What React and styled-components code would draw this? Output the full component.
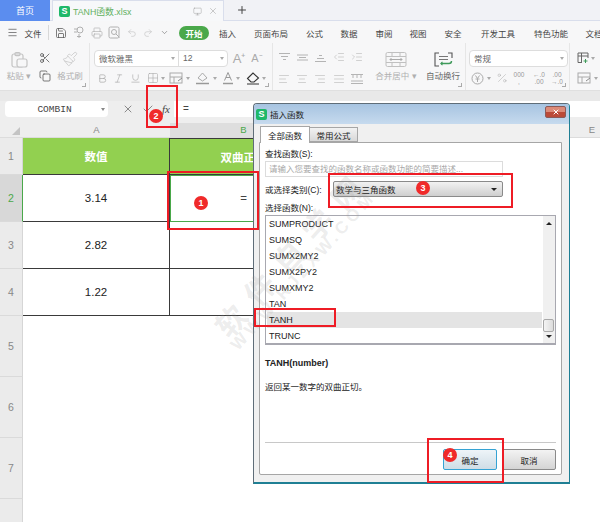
import styled, { createGlobalStyle } from "styled-components";
import {
  AlignCenter, AlignJustify, AlignLeft, AlignRight, Bold, ChevronDown, Copy, Grid2x2, IndentDecrease,
  IndentIncrease, Italic, Menu, Paintbrush, Percent, Printer, Redo2, Save, Scissors, Underline, Undo2, X, Check, Plus, Monitor,
} from "lucide-react";

const CJK = `"Liberation Sans", "Noto Sans CJK SC", sans-serif`;

const GlobalStyle = createGlobalStyle`
  html, body { margin: 0; padding: 0; background: #fff; }
  body { font-family: ${CJK}; }
`;

const Page = styled.div`
  position: relative;
  width: 600px;
  height: 522px;
  overflow: hidden;
  background: #fff;
  font-size: 9px;
  color: #444;
`;

/* title tabs */
const TabBar = styled.div`
  display: flex;
  height: 20px;
  background: #f1f2f6;
  border-bottom: 1px solid #d9deec;
`;
const HomeTab = styled.div`
  width: 50px;
  background: #5b8def;
  color: #fff;
  font-size: 9px;
  display: flex;
  align-items: center;
  justify-content: center;
  margin-bottom: -1px;
`;
const DocTab = styled.div`
  width: 172px;
  margin-left: 2px;
  box-sizing: border-box;
  background: #f7f8fa;
  border: 1px solid #d9deec;
  border-bottom: none;
  margin-bottom: -1px;
  display: flex;
  align-items: center;
  padding-left: 6px;
  color: #62b062;
  font-size: 8.8px;
`;
const SheetLogo = styled.span`
  display: inline-flex;
  align-items: center;
  justify-content: center;
  width: ${(p) => p.$size}px;
  height: ${(p) => p.$size}px;
  border-radius: 2px;
  background: #1fb86a;
  color: #fff;
  font-weight: bold;
  font-size: ${(p) => p.$size - 2}px;
  line-height: 1;
  flex: none;
`;
const DocName = styled.span`
  margin-left: 3px;
  flex: 1;
`;
const DocTools = styled.span`
  display: flex;
  gap: 6px;
  align-items: center;
  color: #999;
  padding-right: 5px;
`;
const NewTab = styled.div`
  width: 36px;
  display: flex;
  align-items: center;
  justify-content: center;
  color: #444;
`;

/* menu row */
const MenuRow = styled.div`
  display: flex;
  align-items: center;
  height: 21px;
  padding-top: 1px;
  background: #f7f7f8;
  font-size: 8.5px;
  color: #444;
  white-space: nowrap;
`;
const Slot = styled.div`
  width: ${(p) => p.$w}px;
  flex: none;
  display: flex;
  align-items: center;
  justify-content: center;
  color: ${(p) => p.$color || "inherit"};
`;
const MenuDivider = styled.div`
  width: 1px;
  height: 15px;
  background: #d8d8d8;
  flex: none;
  margin: 0 3px 0 6px;
`;
const StartPill = styled.div`
  width: 30px;
  height: 14px;
  margin-left: 6px;
  flex: none;
  border-radius: 7px;
  background: #4aa84a;
  color: #fff;
  font-weight: bold;
  display: flex;
  align-items: center;
  justify-content: center;
`;

/* ribbon */
const Ribbon = styled.div`
  display: flex;
  height: 48px;
  background: #f7f7f8;
  border-bottom: 1px solid #e0e0e0;
  box-sizing: border-box;
`;
const RibbonGroup = styled.div`
  width: ${(p) => p.$w}px;
  flex: none;
  box-sizing: border-box;
  position: relative;
  display: flex;
  border-right: 1px solid #e6e6e6;
  &:last-child { border-right: none; }
`;
const Corner = styled.span`
  position: absolute;
  right: 3px;
  bottom: 3px;
  width: 3px;
  height: 3px;
  border-right: 1px solid #aaa;
  border-bottom: 1px solid #aaa;
`;
const BigTool = styled.div`
  width: ${(p) => p.$w}px;
  flex: none;
  display: flex;
  flex-direction: column;
  align-items: center;
  padding-top: ${(p) => p.$top ?? 6}px;
  color: ${(p) => p.$color || "#aaa"};
  font-size: 8.5px;
  white-space: nowrap;
  box-sizing: border-box;
`;
const ToolLabel = styled.span`
  margin-top: ${(p) => p.$gap ?? 3}px;
  line-height: 11px;
  color: ${(p) => p.$color || "#b0b0b0"};
`;
const ToolStack = styled.div`
  width: ${(p) => p.$w}px;
  flex: none;
  display: flex;
  flex-direction: column;
  align-items: ${(p) => p.$align || "center"};
  padding-top: ${(p) => p.$top ?? 6}px;
  gap: ${(p) => p.$gap ?? 5}px;
  box-sizing: border-box;
  padding-left: ${(p) => p.$left ?? 0}px;
`;
const ToolRow = styled.div`
  display: flex;
  align-items: center;
  height: ${(p) => p.$h ?? 16}px;
  color: #aaa;
`;
const ComboBox = styled.div`
  display: flex;
  align-items: center;
  height: 17px;
  box-sizing: border-box;
  background: #fff;
  border: 1px solid #ddd;
  border-radius: 4px;
  font-size: 8.5px;
  color: #666;
`;
const ComboPart = styled.div`
  width: ${(p) => p.$w}px;
  box-sizing: border-box;
  padding-left: 4px;
  display: flex;
  align-items: center;
  justify-content: space-between;
  padding-right: 3px;
  border-right: ${(p) => (p.$split ? "1px solid #ddd" : "none")};
  height: 100%;
`;
const TinyCaret = styled.span`
  width: 0;
  height: 0;
  border-left: 2px solid transparent;
  border-right: 2px solid transparent;
  border-top: 3px solid #aaa;
  margin-left: ${(p) => p.$gap ?? 0}px;
`;
const GlyphTool = styled.span`
  font-size: ${(p) => p.$size || 14}px;
  line-height: 1;
  color: #aaa;
`;
const StackedDigits = styled.span`
  font-size: 6.5px;
  line-height: 7px;
  color: #999;
  text-align: center;
  white-space: pre;
`;

const GreyStrip = styled.div`
  height: 10px;
  background: #e9e9e9;
`;

/* formula bar */
const FormulaBar = styled.div`
  display: flex;
  height: 22px;
  background: #eeeeee;
  align-items: flex-start;
`;
const NameBox = styled.div`
  width: 103px;
  height: 16px;
  margin-left: 5px;
  box-sizing: border-box;
  background: #fff;
  border-radius: 4px;
  display: flex;
  align-items: center;
  justify-content: center;
  position: relative;
  font: 9.5px "Liberation Mono", monospace;
  color: #444;
  padding-right: 4px;
`;
const NameCaret = styled.span`
  position: absolute;
  right: 3px;
  top: 7px;
  width: 0;
  height: 0;
  border-left: 2px solid transparent;
  border-right: 2px solid transparent;
  border-top: 3px solid #888;
`;
const FormulaTools = styled.div`
  width: 66px;
  flex: none;
  height: 16px;
  display: flex;
  align-items: center;
  padding-left: 14px;
  gap: 8px;
  box-sizing: border-box;
  color: #444;
`;
const FxMark = styled.span`
  font: italic 11px "Liberation Serif", serif;
  color: #444;
`;
const FormulaInput = styled.div`
  flex: 1;
  height: 16px;
  background: #fff;
  color: #444;
  padding-left: 9px;
  font-size: 10px;
  line-height: 16px;
`;

/* sheet */
const ColumnHeader = styled.div`
  display: flex;
  height: 15px;
  background: #eeeeee;
  border-bottom: 1px solid #dcdcdc;
  box-sizing: border-box;
`;
const CornerCell = styled.div`
  width: 23px;
  flex: none;
  position: relative;
  &::after {
    content: "";
    position: absolute;
    right: 3px;
    bottom: 2px;
    border-left: 8px solid transparent;
    border-bottom: 8px solid #c4c4c4;
  }
`;
const ColumnCell = styled.div`
  width: ${(p) => p.$w}px;
  flex: none;
  text-align: center;
  font-size: 9.5px;
  line-height: 14px;
  background: ${(p) => (p.$active ? "#dedede" : "transparent")};
  color: ${(p) => (p.$active ? "#4aa84a" : "#888")};
`;
const SheetRow = styled.div`
  display: flex;
  height: ${(p) => p.$h}px;
`;
const RowLabel = styled.div`
  width: 23px;
  flex: none;
  box-sizing: border-box;
  background: ${(p) => (p.$active ? "#d8d8d8" : "#ebebeb")};
  border-right: 1px solid ${(p) => (p.$active ? "#4aa84a" : "#d6d6d6")};
  border-bottom: 1px solid #dadada;
  color: ${(p) => (p.$active ? "#4aa84a" : "#888")};
  font-size: 10.5px;
  display: flex;
  align-items: center;
  justify-content: center;
`;
const DataCell = styled.div`
  width: ${(p) => p.$w}px;
  flex: none;
  box-sizing: border-box;
  display: flex;
  align-items: center;
  justify-content: center;
  font-size: 11.5px;
  color: #222;
  position: relative;
  background: ${(p) => (p.$head ? "#92d050" : "#fff")};
  font-weight: ${(p) => (p.$head ? "bold" : "normal")};
  ${(p) => p.$head && "color: #fff;"}
  border-bottom: 1px solid #3a3a3a;
  border-right: 1px solid #3a3a3a;
  ${(p) => p.$topLine && "border-top: 1px solid #3a3a3a;"}
  ${(p) => p.$open && "border-right: none;"}
  ${(p) => p.$selected && "outline: 1px solid #4aa84a; outline-offset: -1px; color: #444;"}
`;

/* insert function window */
const Dialog = styled.div`
  position: absolute;
  left: 253px;
  top: 103px;
  width: 317px;
  height: 381px;
  box-sizing: border-box;
  display: flex;
  flex-direction: column;
  border: 1px solid #5f6d78;
  border-right-color: #1f7f94;
  border-bottom: 2px solid #1f7f94;
  border-radius: 4px 4px 0 0;
  background: #f0f0f0;
  color: #222;
  font-size: 8.5px;
`;
const DialogTitle = styled.div`
  height: 20px;
  flex: none;
  display: flex;
  align-items: center;
  padding: 0 3px 0 2px;
  background: linear-gradient(#a7c4e1, #c6daee);
  border-radius: 3px 3px 0 0;
  gap: 3px;
  font-size: 8.5px;
  color: #222;
`;
const TitleText = styled.span`
  flex: 1;
`;
const CloseButton = styled.div`
  width: 21px;
  height: 12px;
  border-radius: 2px;
  border: 1px solid #8c5a58;
  box-sizing: border-box;
  background: linear-gradient(#dc8a78 0 45%, #bb4a38 55%);
  display: flex;
  align-items: center;
  justify-content: center;
  color: #fff;
  margin-top: -4px;
`;
const TabStrip = styled.div`
  display: flex;
  align-items: flex-end;
  height: 18px;
  flex: none;
  padding-left: 6px;
  margin-top: 1px;
  position: relative;
  z-index: 1;
  margin-bottom: -1px;
`;
const DialogTab = styled.div`
  width: ${(p) => p.$w}px;
  height: ${(p) => (p.$active ? 17 : 15)}px;
  box-sizing: border-box;
  border: 1px solid #a6a6a6;
  border-left: ${(p) => (p.$active ? "1px solid #a6a6a6" : "none")};
  border-bottom: ${(p) => (p.$active ? "none" : "1px solid #a6a6a6")};
  background: ${(p) => (p.$active ? "#fff" : "linear-gradient(#f2f2f2, #d8d8d8)")};
  display: flex;
  align-items: center;
  justify-content: center;
  font-size: 8.5px;
  margin-bottom: ${(p) => (p.$active ? 0 : 1)}px;
`;
const Panel = styled.div`
  flex: 1;
  margin: 0 7px 7px 5px;
  background: #fff;
  border: 1px solid #a6a6a6;
  border-radius: 0 0 2px 2px;
  padding: 5px 4px 0 5px;
  display: flex;
  flex-direction: column;
  min-height: 0;
`;
const FieldLabel = styled.div`
  height: 12px;
  line-height: 12px;
  flex: none;
`;
const SearchInput = styled.div`
  width: 238px;
  height: 16px;
  margin-top: 1px;
  flex: none;
  box-sizing: border-box;
  border: 1px solid #dcdcdc;
  color: #a8a8a8;
  padding-left: 3px;
  line-height: 14px;
  white-space: nowrap;
  overflow: hidden;
`;
const CategoryRow = styled.div`
  display: flex;
  align-items: center;
  margin-top: 4px;
  height: 16px;
  flex: none;
`;
const CategoryLabel = styled.div`
  width: 68px;
  flex: none;
`;
const CategorySelect = styled.div`
  width: 170px;
  height: 16px;
  box-sizing: border-box;
  border: 1px solid #8a8a8a;
  border-radius: 2px;
  background: linear-gradient(#f2f2f2, #cfcfcf);
  padding: 0 5px 0 2px;
  display: flex;
  align-items: center;
  justify-content: space-between;
`;
const BlackCaret = styled.span`
  width: 0;
  height: 0;
  border-left: 3px solid transparent;
  border-right: 3px solid transparent;
  border-${(p) => (p.$up ? "bottom" : "top")}: 3px solid #222;
`;
const ListLabel = styled(FieldLabel)`
  margin-top: 5px;
`;
const FunctionList = styled.div`
  width: 291px;
  height: 130px;
  flex: none;
  box-sizing: border-box;
  border: 1px solid #a8a8b0;
  border-bottom-width: 2px;
  display: flex;
  margin-top: 1px;
`;
const ListRows = styled.div`
  flex: 1;
  padding: 0 1px;
`;
const ListRow = styled.div`
  height: 16px;
  line-height: 16px;
  padding-left: 2px;
  font-size: 9px;
  background: ${(p) => (p.$selected ? "#e4e4e4" : "transparent")};
`;
const ScrollTrack = styled.div`
  width: 12px;
  flex: none;
  background: #f0f0f0;
  display: flex;
  flex-direction: column;
  align-items: center;
  justify-content: space-between;
  padding: 6px 0 5px;
  box-sizing: border-box;
  position: relative;
`;
const ScrollThumb = styled.div`
  position: absolute;
  left: 0;
  top: 103px;
  width: 11px;
  height: 13px;
  box-sizing: border-box;
  border: 1px solid #a8a8a8;
  border-radius: 2px;
  background: linear-gradient(90deg, #f4f4f4, #dcdcdc);
`;
const Signature = styled.div`
  font-weight: bold;
  font-size: 9px;
  margin-top: 12px;
  line-height: 12px;
  flex: none;
`;
const Description = styled.div`
  margin-top: 12px;
  line-height: 12px;
  flex: none;
`;
const PanelRule = styled.div`
  width: 291px;
  height: 1px;
  background: #c8c8c8;
  margin-top: 49px;
  flex: none;
`;
const ButtonRow = styled.div`
  width: 291px;
  display: flex;
  justify-content: flex-end;
  gap: 5px;
  margin-top: 6px;
  flex: none;
`;
const DialogButton = styled.div`
  width: 54px;
  height: 21px;
  box-sizing: border-box;
  display: flex;
  align-items: center;
  justify-content: center;
  border-radius: 2px;
  border: 1px solid ${(p) => (p.$primary ? "#35a3d4" : "#8a8a8a")};
  background: ${(p) => (p.$primary ? "linear-gradient(#eef4f8, #cfdde6)" : "linear-gradient(#f3f3f3, #d4d4d4)")};
`;

/* overlays */
const Watermark = styled.div`
  position: absolute;
  left: 211px;
  top: 323px;
  transform-origin: 0 0;
  transform: rotate(-48deg);
  color: rgba(150, 150, 150, 0.18);
  font-weight: bold;
  pointer-events: none;
  z-index: 4;
  white-space: nowrap;
`;
const WatermarkTitle = styled.div`
  font-size: 30px;
  line-height: 30px;
  letter-spacing: 13px;
`;
const WatermarkSite = styled.div`
  font-size: 17px;
  line-height: 16px;
  letter-spacing: 4px;
  margin: -4px 0 0 -3px;
`;
const CalloutBox = styled.div`
  position: absolute;
  left: ${(p) => p.$x}px;
  top: ${(p) => p.$y}px;
  width: ${(p) => p.$w}px;
  height: ${(p) => p.$h}px;
  box-sizing: border-box;
  border: 2px solid #ee1c25;
  z-index: 5;
`;
const Badge = styled.div`
  position: absolute;
  left: ${(p) => p.$x - 7}px;
  top: ${(p) => p.$y - 7}px;
  width: 14px;
  height: 14px;
  border-radius: 50%;
  background: #f02a2a;
  color: #fff;
  font-size: 9px;
  font-weight: bold;
  display: flex;
  align-items: center;
  justify-content: center;
  z-index: 6;
`;

const menuItems = [["插入", 37], ["页面布局", 50], ["公式", 37], ["数据", 32], ["审阅", 38], ["视图", 30], ["安全", 40], ["开发工具", 50], ["特色功能", 56], ["文档", 30]];
const functions = ["SUMPRODUCT", "SUMSQ", "SUMX2MY2", "SUMX2PY2", "SUMXMY2", "TAN", "TANH", "TRUNC"];
const rows = [
  { n: 2, h: 47, a: "3.14", active: true },
  { n: 3, h: 47, a: "2.82" },
  { n: 4, h: 47, a: "1.22" },
];

// icon drawings the packages don't carry
const FillIcon = () => (
  <svg width="17" height="14" viewBox="0 0 17 14" fill="none" stroke="#aaa" strokeWidth="1">
    <path d="M4 7 L8.5 2 L13 7 L8.5 10 Z" />
    <path d="M2 12.5 H15" stroke="#999" strokeWidth="1.5" />
  </svg>
);
const EraserIcon = () => (
  <svg width="14" height="14" viewBox="0 0 14 14" fill="none" stroke="#333" strokeWidth="1.1">
    <path d="M1.5 7.5 L7 2 L12.5 7 L8 11 H5 Z" />
    <path d="M1 13 H13" strokeWidth="1" />
  </svg>
);
const FontColorIcon = () => (
  <svg width="12" height="14" viewBox="0 0 12 14" fill="none" stroke="#999" strokeWidth="1">
    <path d="M2.5 9.5 L6 1.5 L9.5 9.5 M4 6.5 H8" />
    <path d="M1 12.5 H11" strokeWidth="1.5" />
  </svg>
);
const TableEditIcon = () => (
  <svg width="15" height="13" viewBox="0 0 15 13" fill="none" stroke="#aaa" strokeWidth="1">
    <rect x="1" y="1" width="12" height="10" />
    <path d="M1 5 H13 M5 5 V11" />
    <path d="M9 9 L13 6" stroke="#8a8a8a" />
  </svg>
);
const CellStyleIcon = () => (
  <svg width="12" height="12" viewBox="0 0 12 12" fill="none" stroke="#666" strokeWidth="1">
    <path d="M5 10.5 H1 V1 H11 V6 M1 4 H11 M4.500 1 V10" />
    <path d="M8.500 7 V11 M6.500 9 H10.500" stroke="#3f9a5a" />
  </svg>
);
const PasteIcon = () => (
  <svg width="17" height="16" viewBox="0 0 17 16" fill="none" stroke="#c4c4c4" strokeWidth="1.2">
    <rect x="1" y="2" width="11" height="13" rx="2" />
    <rect x="4" y="0.600" width="5" height="3" rx="1" />
    <rect x="6" y="7" width="10" height="8" rx="2" fill="#f7f7f8" />
  </svg>
);
const MergeIcon = () => (
  <svg width="26" height="15" viewBox="0 0 26 15" fill="none" stroke="#c0c0c0" strokeWidth="1">
    <rect x="3" y="0.5" width="20" height="14" rx="1.5" />
    <path d="M3 4.5 H23 M3 10.5 H23 M9 0.5 V4.5 M17 0.5 V4.5 M9 10.5 V14.5 M17 10.5 V14.5" />
    <path d="M7 7.5 H19 M8.5 6 L7 7.5 L8.5 9 M17.5 6 L19 7.5 L17.5 9" stroke="#aaa" />
  </svg>
);
const WrapIcon = () => (
  <svg width="19" height="15" viewBox="0 0 19 15" fill="none" stroke="#555" strokeWidth="1.1">
    <path d="M5 1 H1 V14 H5 M14 1 H18 V6" />
    <path d="M5 4.5 H14 M5 7.5 H14" stroke="#777" />
    <path d="M7 11.5 H15 Q17.5 11.5 17.5 9" stroke="#3f9a5a" strokeWidth="1.4" />
    <path d="M8.5 9.8 L6.8 11.5 L8.5 13.2" stroke="#3f9a5a" />
  </svg>
);
const CurrencyIcon = () => (
  <svg width="13" height="13" viewBox="0 0 13 13" fill="none" stroke="#aaa" strokeWidth="1">
    <circle cx="6.5" cy="6.5" r="5.5" />
    <path d="M4.5 3.5 L6.5 6.5 L8.5 3.5 M6.5 6.5 V10 M4.5 7 H8.5" />
  </svg>
);
const ShareIcon = () => (
  <svg width="12" height="13" viewBox="0 0 12 13" fill="none" stroke="#b0b0b0" strokeWidth="1">
    <circle cx="7" cy="4" r="3" />
    <path d="M1 3 H5 M1 6 H4 M6 8 V12 M4 10.5 H8" />
  </svg>
);
const PreviewIcon = () => (
  <svg width="13" height="13" viewBox="0 0 13 13" fill="none" stroke="#b0b0b0" strokeWidth="1">
    <rect x="1" y="1" width="10" height="11" rx="1.5" />
    <circle cx="6" cy="6" r="2.5" />
    <path d="M8 8 L11.5 11.5" />
  </svg>
);
const VerticalTop = () => (
  <svg width="13" height="11" viewBox="0 0 13 11" stroke="#b4b4b4"><path d="M1 1.5 H12 M3 4.5 H10 M5 7.5 H8" /></svg>
);
const VerticalMiddle = () => (
  <svg width="13" height="11" viewBox="0 0 13 11" stroke="#b4b4b4"><path d="M1 3 H12 M3 5.5 H10 M1 8 H12" /></svg>
);
const VerticalBottom = () => (
  <svg width="13" height="11" viewBox="0 0 13 11" stroke="#b4b4b4"><path d="M5 3.5 H8 M3 6.5 H10 M1 9.5 H12" /></svg>
);
const SplitAlign = () => (
  <svg width="14" height="12" viewBox="0 0 14 12" stroke="#b4b4b4"><path d="M1 1.5 H13 M1 10.5 H13 M1 8 H13 M3 1 V5 M7 1 V5 M11 1 V5" /></svg>
);

const App = () => (
  <Page>
    <GlobalStyle />
    <TabBar>
      <HomeTab>首页</HomeTab>
      <DocTab>
        <SheetLogo $size={11}>S</SheetLogo>
        <DocName>TANH函数.xlsx</DocName>
        <DocTools>
          <Monitor size={9} strokeWidth={1.2} />
          <X size={10} strokeWidth={1.2} />
        </DocTools>
      </DocTab>
      <NewTab><Plus size={12} strokeWidth={2} /></NewTab>
    </TabBar>

    <MenuRow>
      <Slot $w={24}><Menu size={11} strokeWidth={1.4} /></Slot>
      <Slot $w={18}>文件</Slot>
      <MenuDivider />
      <Slot $w={18} $color="#555"><Save size={12} strokeWidth={1.5} /></Slot>
      <Slot $w={18}><ShareIcon /></Slot>
      <Slot $w={17} $color="#aaa"><Printer size={12} strokeWidth={1.2} /></Slot>
      <Slot $w={18}><PreviewIcon /></Slot>
      <Slot $w={17} $color="#bbb"><Undo2 size={10} strokeWidth={1.3} /></Slot>
      <Slot $w={16} $color="#bbb"><Redo2 size={10} strokeWidth={1.3} /></Slot>
      <Slot $w={17} $color="#666"><ChevronDown size={9} strokeWidth={1.5} /></Slot>
      <StartPill>开始</StartPill>
      {menuItems.map(([label, w]) => (
        <Slot $w={w} key={label}>{label}</Slot>
      ))}
    </MenuRow>

    <Ribbon>
      <RibbonGroup $w={90}>
        <BigTool $w={38} $top={9}>
          <PasteIcon />
          <ToolLabel $gap={3}>粘贴 ▾</ToolLabel>
        </BigTool>
        <ToolStack $w={14} $top={7} $gap={3}>
          <ToolRow $h={15}><Scissors size={12} strokeWidth={1.4} color="#444" /></ToolRow>
          <ToolRow $h={15}><Copy size={12} strokeWidth={1.4} color="#444" /></ToolRow>
        </ToolStack>
        <BigTool $w={36} $top={8}>
          <Paintbrush size={16} strokeWidth={1} color="#c0c0c0" />
          <ToolLabel $gap={4}>格式刷</ToolLabel>
        </BigTool>
        <Corner />
      </RibbonGroup>

      <RibbonGroup $w={183}>
        <ToolStack $w={183} $left={4} $top={6} $gap={2} $align="flex-start">
          <ToolRow $h={18}>
            <ComboBox>
              <ComboPart $w={84} $split>微软雅黑<TinyCaret /></ComboPart>
              <ComboPart $w={48}>12<TinyCaret /></ComboPart>
            </ComboBox>
            <Slot $w={22}><GlyphTool $size={13}>A⁺</GlyphTool></Slot>
            <Slot $w={14}><GlyphTool $size={11}>A⁻</GlyphTool></Slot>
          </ToolRow>
          <ToolRow $h={18}>
            <Slot $w={16}><Bold size={11} strokeWidth={1.6} /></Slot>
            <Slot $w={16}><Italic size={11} strokeWidth={1.4} /></Slot>
            <Slot $w={18}><Underline size={11} strokeWidth={1.4} /></Slot>
            <Slot $w={24}><Grid2x2 size={12} strokeWidth={1.2} /><TinyCaret $gap={2} /></Slot>
            <Slot $w={22}><TableEditIcon /><TinyCaret $gap={2} /></Slot>
            <Slot $w={30}><FillIcon /><TinyCaret $gap={2} /></Slot>
            <Slot $w={22}><FontColorIcon /><TinyCaret $gap={2} /></Slot>
            <Slot $w={28}><EraserIcon /><TinyCaret $gap={2} /></Slot>
          </ToolRow>
        </ToolStack>
        <Corner />
      </RibbonGroup>

      <RibbonGroup $w={193}>
        <ToolStack $w={99} $top={6} $gap={6} $align="flex-start" $left={2}>
          <ToolRow>
            <Slot $w={18}><VerticalTop /></Slot>
            <Slot $w={18}><VerticalMiddle /></Slot>
            <Slot $w={18}><VerticalBottom /></Slot>
            <Slot $w={19}><IndentDecrease size={12} strokeWidth={1} /></Slot>
            <Slot $w={18}><IndentIncrease size={12} strokeWidth={1} /></Slot>
          </ToolRow>
          <ToolRow>
            <Slot $w={18}><AlignLeft size={12} strokeWidth={1} /></Slot>
            <Slot $w={18}><AlignCenter size={12} strokeWidth={1} /></Slot>
            <Slot $w={18}><AlignRight size={12} strokeWidth={1} /></Slot>
            <Slot $w={19}><AlignJustify size={12} strokeWidth={1} /></Slot>
            <Slot $w={18}><SplitAlign /></Slot>
          </ToolRow>
        </ToolStack>
        <BigTool $w={48} $top={9}>
          <MergeIcon />
          <ToolLabel $gap={4}>合并居中 ▾</ToolLabel>
        </BigTool>
        <BigTool $w={46} $top={9}>
          <WrapIcon />
          <ToolLabel $gap={4} $color="#666">自动换行</ToolLabel>
        </BigTool>
        <Corner />
      </RibbonGroup>

      <RibbonGroup $w={104}>
        <ToolStack $w={104} $left={3} $top={6} $gap={2} $align="flex-start">
          <ToolRow $h={18}>
            <ComboBox>
              <ComboPart $w={97}>常规<TinyCaret /></ComboPart>
            </ComboBox>
          </ToolRow>
          <ToolRow $h={18}>
            <Slot $w={24}><CurrencyIcon /><TinyCaret $gap={3} /></Slot>
            <Slot $w={18}><Percent size={12} strokeWidth={1} /></Slot>
            <Slot $w={16}><StackedDigits>{"000\n,"}</StackedDigits></Slot>
            <Slot $w={24}><StackedDigits>{"←.0\n.00"}</StackedDigits></Slot>
            <Slot $w={12}><StackedDigits>{".00\n→.0"}</StackedDigits></Slot>
          </ToolRow>
        </ToolStack>
        <Corner />
      </RibbonGroup>

      <RibbonGroup $w={30}>
        <ToolStack $w={30} $top={7} $gap={4} $align="flex-start" $left={7}>
          <ToolRow><CellStyleIcon /><TinyCaret $gap={2} /></ToolRow>
          <ToolRow><TableEditIcon /><TinyCaret $gap={2} /></ToolRow>
        </ToolStack>
      </RibbonGroup>
    </Ribbon>
    <GreyStrip />

    <FormulaBar>
      <NameBox>COMBIN<NameCaret /></NameBox>
      <FormulaTools>
        <X size={12} strokeWidth={1.2} />
        <Check size={12} strokeWidth={1.2} />
        <FxMark>fx</FxMark>
      </FormulaTools>
      <FormulaInput>=</FormulaInput>
    </FormulaBar>

    <ColumnHeader>
      <CornerCell />
      <ColumnCell $w={147}>A</ColumnCell>
      <ColumnCell $w={147} $active>B</ColumnCell>
      <ColumnCell $w={101}>C</ColumnCell>
      <ColumnCell $w={101}>D</ColumnCell>
      <ColumnCell $w={146}>E</ColumnCell>
    </ColumnHeader>

    <SheetRow $h={37}>
      <RowLabel>1</RowLabel>
      <DataCell $w={147} $head>数值</DataCell>
      <DataCell $w={147} $head $topLine $open>双曲正切</DataCell>
    </SheetRow>
    {rows.map((r) => (
      <SheetRow $h={r.h} key={r.n}>
        <RowLabel $active={r.active}>{r.n}</RowLabel>
        <DataCell $w={147}>{r.a}</DataCell>
        <DataCell $w={147} $open $selected={r.active}>{r.active ? "=" : ""}</DataCell>
      </SheetRow>
    ))}
    {[5, 6, 7, 8].map((n) => (
      <SheetRow $h={61} key={n}>
        <RowLabel>{n < 8 ? n : ""}</RowLabel>
      </SheetRow>
    ))}

    <Dialog>
      <DialogTitle>
        <SheetLogo $size={11}>S</SheetLogo>
        <TitleText>插入函数</TitleText>
        <CloseButton><X size={8} strokeWidth={3} /></CloseButton>
      </DialogTitle>
      <TabStrip>
        <DialogTab $w={50} $active>全部函数</DialogTab>
        <DialogTab $w={48}>常用公式</DialogTab>
      </TabStrip>
      <Panel>
        <FieldLabel>查找函数(S):</FieldLabel>
        <SearchInput>请输入您要查找的函数名称或函数功能的简要描述...</SearchInput>
        <CategoryRow>
          <CategoryLabel>或选择类别(C):</CategoryLabel>
          <CategorySelect>数学与三角函数<BlackCaret /></CategorySelect>
        </CategoryRow>
        <ListLabel>选择函数(N):</ListLabel>
        <FunctionList>
          <ListRows>
            {functions.map((name) => (
              <ListRow key={name} $selected={name === "TANH"}>{name}</ListRow>
            ))}
          </ListRows>
          <ScrollTrack>
            <BlackCaret $up />
            <ScrollThumb />
            <BlackCaret />
          </ScrollTrack>
        </FunctionList>
        <Signature>TANH(number)</Signature>
        <Description>返回某一数字的双曲正切。</Description>
        <PanelRule />
        <ButtonRow>
          <DialogButton $primary>确定</DialogButton>
          <DialogButton>取消</DialogButton>
        </ButtonRow>
      </Panel>
    </Dialog>

    <Watermark>
      <WatermarkTitle>软件自学网</WatermarkTitle>
      <WatermarkSite>WWW.RJZXW.COM</WatermarkSite>
    </Watermark>

    <CalloutBox $x={167} $y={171} $w={92} $h={59} />
    <CalloutBox $x={146} $y={85} $w={32} $h={43} />
    <CalloutBox $x={328} $y={173} $w={185} $h={35} />
    <CalloutBox $x={427} $y={438} $w={77} $h={45} />
    <CalloutBox $x={254} $y={308} $w={82} $h={19} />
    <Badge $x={201} $y={203}>1</Badge>
    <Badge $x={156} $y={116}>2</Badge>
    <Badge $x={423} $y={188}>3</Badge>
    <Badge $x={450} $y={455}>4</Badge>
  </Page>
);

export default App;
